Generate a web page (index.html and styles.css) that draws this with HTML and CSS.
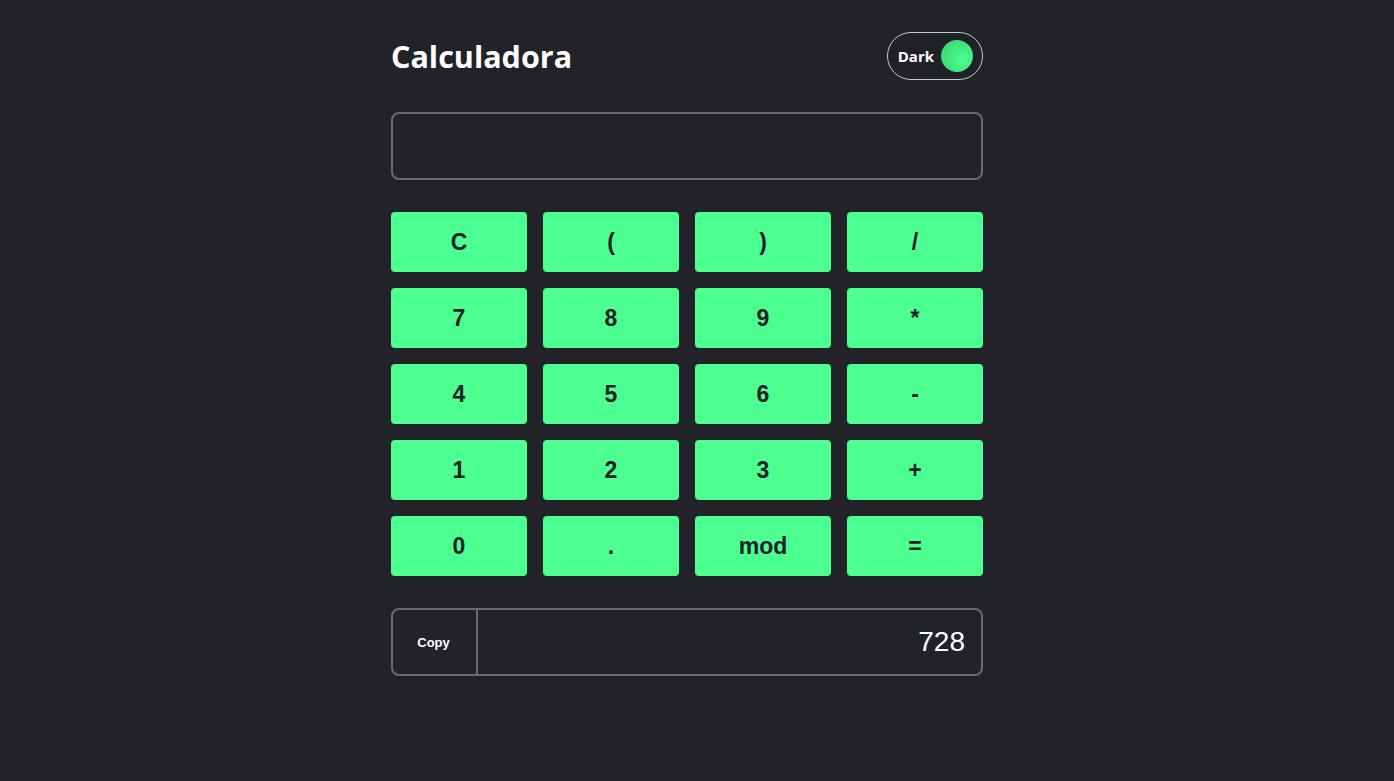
FILE: index.html
```html
<!DOCTYPE html>
<html lang="pt">
<head>
<meta charset="utf-8">
<title>Calculadora</title>
<link rel="stylesheet" href="styles.css">
</head>
<body>
<main class="calc">
  <header class="head">
    <h1 class="title">Calculadora</h1>
    <button class="toggle"><span class="toggle-label">Dark</span><span class="knob"></span></button>
  </header>
  <div class="display"></div>
  <div class="keys">
    <button class="key">C</button>
    <button class="key">(</button>
    <button class="key">)</button>
    <button class="key">/</button>
    <button class="key">7</button>
    <button class="key">8</button>
    <button class="key">9</button>
    <button class="key">*</button>
    <button class="key">4</button>
    <button class="key">5</button>
    <button class="key">6</button>
    <button class="key">-</button>
    <button class="key">1</button>
    <button class="key">2</button>
    <button class="key">3</button>
    <button class="key">+</button>
    <button class="key">0</button>
    <button class="key">.</button>
    <button class="key">mod</button>
    <button class="key">=</button>
  </div>
  <div class="result">
    <button class="copy">Copy</button>
    <div class="value">728</div>
  </div>
</main>
</body>
</html>
```

FILE: styles.css
```css
* { box-sizing: border-box; }
html, body { margin: 0; padding: 0; }
body {
  background: #212329;
  color: #ffffff;
  font-family: "Liberation Sans", Arial, sans-serif;
  min-height: 100vh;
  padding-right: 20px;
}
.calc {
  width: 592px;
  margin: 0 auto;
  padding-top: 32px;
  display: flex;
  flex-direction: column;
  gap: 32px;
}
.head {
  display: flex;
  justify-content: space-between;
  align-items: center;
  height: 48px;
}
.title {
  margin: 0;
  font-family: "Open Sans", "Noto Sans", sans-serif;
  font-weight: 700;
  font-size: 30.5px;
  letter-spacing: 0;
  color: #ffffff;
}
.toggle {
  width: 96px;
  height: 48px;
  border: 1px solid #c8c8cc;
  border-radius: 24px;
  background: #1f2126;
  display: flex;
  align-items: center;
  justify-content: flex-end;
  gap: 7px;
  padding: 0 9px 0 0;
  color: #ffffff;
  cursor: pointer;
}
.toggle-label {
  font-family: "Open Sans", "Noto Sans", sans-serif;
  font-weight: 700;
  font-size: 15px;
}
.knob {
  width: 32px;
  height: 32px;
  border-radius: 50%;
  background: radial-gradient(circle at 65% 60%, #4dff91 0%, #3ddc7a 70%, #38cf72 100%);
}
.display {
  height: 68px;
  border: 2px solid #6a6b6f;
  border-radius: 8px;
}
.keys {
  display: grid;
  grid-template-columns: repeat(4, 1fr);
  grid-auto-rows: 60px;
  gap: 16px;
}
.key {
  border: none;
  border-radius: 4px;
  background: #4dff91;
  color: #1f2127;
  font-family: "Liberation Sans", Arial, sans-serif;
  font-weight: 700;
  font-size: 23px;
  cursor: pointer;
  padding: 0;
}
.result {
  display: flex;
  height: 68px;
  border: 2px solid #6a6b6f;
  border-radius: 8px;
  overflow: hidden;
}
.copy {
  width: 87px;
  flex: none;
  border: none;
  border-right: 2px solid #6a6b6f;
  background: transparent;
  color: #ffffff;
  font-family: "Liberation Sans", Arial, sans-serif;
  font-weight: 700;
  font-size: 13px;
  padding: 0;
  margin-left: -2px;
}
.value {
  flex: 1;
  display: flex;
  align-items: center;
  justify-content: flex-end;
  padding-right: 16px;
  font-size: 28px;
  color: #ffffff;
}
```
